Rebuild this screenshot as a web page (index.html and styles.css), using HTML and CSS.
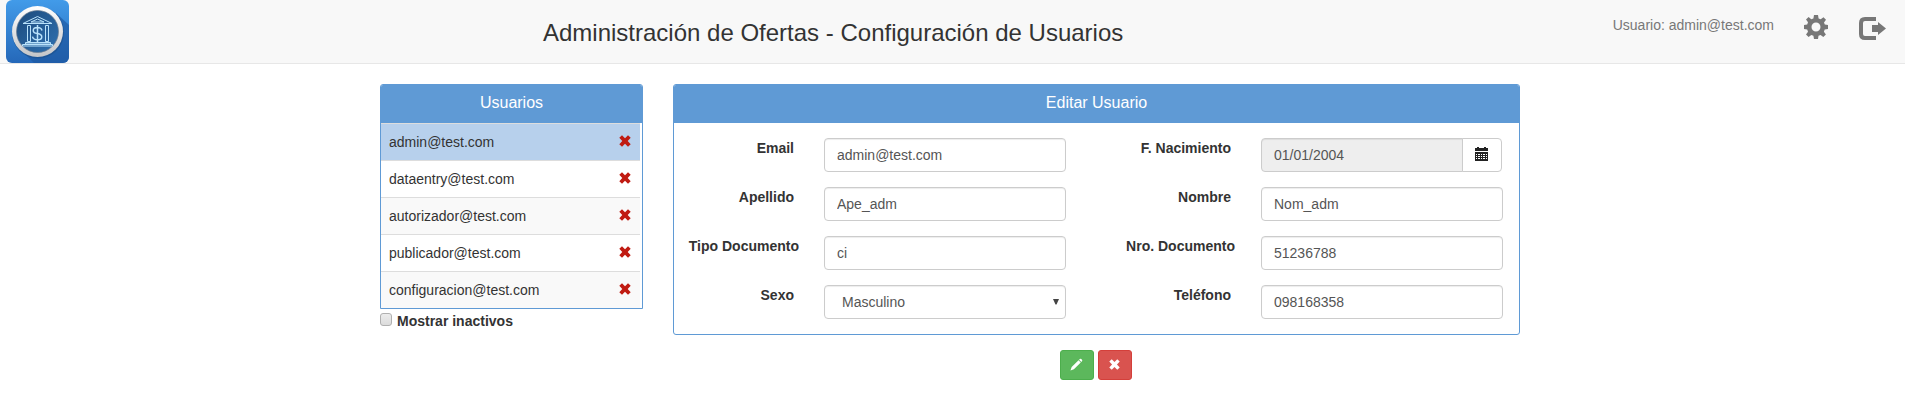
FILE: index.html
```html
<!DOCTYPE html>
<html lang="es">
<head>
<meta charset="utf-8">
<title>Configuración de Usuarios</title>
<link rel="stylesheet" href="styles.css">
</head>
<body>
<svg class="defs" width="0" height="0">
  <symbol id="remove" viewBox="0 0 12 12"><path d="M3 0.3 L6 3.2 L9 0.3 L11.7 2.8 L8.7 6 L11.7 9.2 L9 11.7 L6 8.8 L3 11.7 L0.3 9.2 L3.3 6 L0.3 2.8 Z"/></symbol>
</svg>
<header class="navbar">
  <svg class="logo" viewBox="0 0 63 63">
    <defs>
      <linearGradient id="bg" x1="0" y1="0" x2="0" y2="1"><stop offset="0" stop-color="#429be9"/><stop offset="1" stop-color="#2568b9"/></linearGradient>
      <linearGradient id="ring" x1="0" y1="0" x2="0" y2="1"><stop offset="0" stop-color="#fff"/><stop offset="1" stop-color="#c4c5c8"/></linearGradient>
      <linearGradient id="disc" x1="0" y1="0" x2="1" y2="1"><stop offset="0" stop-color="#1d4b7c"/><stop offset="1" stop-color="#2e70b1"/></linearGradient>
      <clipPath id="tile"><rect width="63" height="63" rx="6"/></clipPath>
    </defs>
    <g clip-path="url(#tile)">
      <rect width="63" height="63" fill="url(#bg)"/>
      <path d="M50 13L63 25V63H28L14 49Z" fill="#1d579f" opacity=".65"/>
      <circle cx="32" cy="32.500" r="26" fill="#194b83" opacity=".5"/>
      <circle cx="31.500" cy="31.500" r="25.500" fill="url(#ring)"/>
      <circle cx="31.500" cy="31.500" r="21" fill="url(#disc)" stroke="#687b91" stroke-width=".7"/>
      <g fill="none" stroke="#b9e2fb" stroke-width="1">
        <path d="M31.500 16.500L46 23.500H17ZM31.500 19L38 22H25ZM21.500 25.500h3v16h-3zM39.500 25.500h3v16h-3z"/>
        <path d="M19.500 42.500h25v1.500h-25zM16.500 44.500h30v1.500h-30z"/>
        <path d="M36 30.500c-.5-2-2-3-4.500-3-5.400 0-5.800 5.200-.3 6 6.300.8 5.800 6.300.3 6.300-3 0-4.500-1.200-5-3.200M31.500 25v17" stroke-width="1.500"/>
      </g>
    </g>
  </svg>
  <h1 class="title">Administración de Ofertas - Configuración de Usuarios</h1>
  <div class="session">
    <span>Usuario: admin@test.com</span>
    <svg class="gear" viewBox="0 0 24 24"><path fill-rule="evenodd" d="M10 0h4l.6 3.400 2.100.9L19.500 2.200 22 4.700l-2 2.700.8 2.200L24 10v4l-3.300.5-.8 2.200 2 2.700-2.600 2.600-2.700-2-2.100.8L14 24h-4l-.6-3.200-2.100-.8-2.700 2L2 19.400l2-2.700-.8-2.200L0 14v-4l3.200-.5.8-2.200-2-2.700 2.600-2.500 2.700 2.100 2.100-.8zM12 7.500a4.500 4.500 0 1 0 0 9 4.500 4.500 0 0 0 0-9z"/></svg>
    <svg class="logout" viewBox="0 0 27 23"><path d="M17 0v4H6Q4 4 4 6V17Q4 19 6 19H17V23H6Q0 23 0 17V6Q0 0 6 0ZM13 8H19V5L27 11.500L19 18V15H13Z"/></svg>
  </div>
</header>
<main class="content">
  <section class="users">
    <div class="panel">
      <h2 class="heading">Usuarios</h2>
      <ul class="list">
        <li class="row active"><span>admin@test.com</span><svg class="x"><use href="#remove"/></svg></li>
        <li class="row"><span>dataentry@test.com</span><svg class="x"><use href="#remove"/></svg></li>
        <li class="row"><span>autorizador@test.com</span><svg class="x"><use href="#remove"/></svg></li>
        <li class="row"><span>publicador@test.com</span><svg class="x"><use href="#remove"/></svg></li>
        <li class="row"><span>configuracion@test.com</span><svg class="x"><use href="#remove"/></svg></li>
      </ul>
    </div>
    <label class="inactive"><span class="check"></span>Mostrar inactivos</label>
  </section>
  <section class="editor">
    <div class="panel rounded">
      <h2 class="heading">Editar Usuario</h2>
      <div class="form">
        <label class="label">Email</label><input class="input" value="admin@test.com">
        <label class="label">F. Nacimiento</label>
        <div class="date"><input class="input locked" value="01/01/2004" readonly><button class="addon"><svg class="calendar" viewBox="0 0 14 14"><path fill-rule="evenodd" d="M0 1H2V0H4V1H9V0H11V1H13V4H0ZM0 5H13V14H0ZM1 7v1h1V7zM3 7v1h2V7zM6 7v1h1V7zM8 7v1h2V7zM11 7v1h1V7zM1 9v1h1V9zM3 9v1h2V9zM6 9v1h1V9zM8 9v1h2V9zM11 9v1h1V9zM1 11v1h1v-1zM3 11v1h2v-1zM6 11v1h1v-1zM8 11v1h2v-1zM11 11v1h1v-1z"/></svg></button></div>
        <label class="label">Apellido</label><input class="input" value="Ape_adm">
        <label class="label">Nombre</label><input class="input" value="Nom_adm">
        <label class="label wide">Tipo Documento</label><input class="input" value="ci">
        <label class="label wide">Nro. Documento</label><input class="input" value="51236788">
        <label class="label">Sexo</label><div class="input select"><span>Masculino</span><svg class="arrow" viewBox="0 0 6 6"><path d="M0 0H6L3.500 5.500H2.500Z"/></svg></div>
        <label class="label">Teléfono</label><input class="input" value="098168358">
      </div>
    </div>
    <div class="actions">
      <button class="btn save"><svg class="pencil" viewBox="0 0 14 14"><path d="M10.500 1.100Q11.300.3 12.100 1.100L12.900 1.900Q13.700 2.700 12.900 3.500L12.200 4.200 9.800 1.800zM9.200 2.400L11.600 4.800 4.200 12.200 .5 13.500 1.800 9.800z"/></svg></button>
      <button class="btn cancel"><svg class="x" viewBox="0 0 12 12"><use href="#remove" width="12" height="12"/></svg></button>
    </div>
  </section>
</main>
</body>
</html>
```

FILE: styles.css
```css
* { box-sizing: border-box; }
body { margin: 0; background: #fff; color: #333; font: 14px/20px "Liberation Sans", Arial, sans-serif; }
.defs { display: block; }
.navbar { display: grid; grid-template-columns: 543px 1fr auto; height: 64px; background: #f8f8f8; border-bottom: 1px solid #e7e7e7; }
.logo { width: 63px; height: 63px; margin-left: 6px; }
.title { margin: 20px 0 0; font-size: 24px; line-height: 26px; font-weight: 400; white-space: nowrap; }
.session { display: flex; align-items: flex-start; padding: 15px 19px 0 0; color: #777; fill: #777; }
.gear { width: 24px; height: 24px; margin-left: 30px; }
.logout { width: 27px; height: 23px; margin: 2px 0 0 31px; }
.content { display: flex; gap: 30px; padding: 20px 0 0 380px; }
.users { width: 263px; }
.editor { width: 847px; }
.panel { border: 1px solid #5f9ad5; border-radius: 3px 3px 0 0; }
.rounded { border-radius: 3px; }
.heading { height: 38px; margin: 0; border-radius: 2px 2px 0 0; background: #5f9ad5; color: #fff; font-size: 16px; line-height: 36px; font-weight: 400; text-align: center; }
.list { list-style: none; margin: 0; padding: 0 2px 0 0; }
.row { display: flex; justify-content: space-between; height: 37px; padding: 8px 9px 0 8px; border-top: 1px solid #ddd; }
.row:nth-child(odd) { background: #f9f9f9; }
.row.active { background: #b7d0ec; }
.x { width: 12px; height: 12px; }
.row .x { fill: #c01b12; margin-top: 3px; }
.inactive { display: flex; align-items: flex-start; gap: 4px; height: 25px; padding-top: 2px; font-weight: 700; }
.check { width: 12px; height: 13px; margin: 2px 1px 0 0; border: 1px solid #b0b0b0; border-radius: 3px; background: linear-gradient(#ececec, #dcdcdc); }
.form { display: grid; grid-template-columns: 120px 242px 135px 242px; grid-auto-rows: 34px; column-gap: 30px; row-gap: 15px; padding: 15px 0; }
.label { font-weight: 700; text-align: right; white-space: nowrap; }
.wide { margin-right: -5px; }
.form .wide:nth-child(4n+3) { margin-right: -4px; }
.input { width: 100%; height: 34px; padding: 6px 12px; border: 1px solid #ccc; border-radius: 4px; background: #fff; color: #555; font: 14px/20px "Liberation Sans", Arial, sans-serif; box-shadow: inset 0 1px 1px rgba(0,0,0,.075); }
.date { display: flex; width: 241px; }
.locked { width: 202px; flex: none; border-radius: 4px 0 0 4px; background: #eee; }
.addon { width: 40px; height: 34px; margin-left: -1px; padding: 0 0 2px 12px; display: flex; align-items: center; border: 1px solid #ccc; border-radius: 0 4px 4px 0; background: #fff; }
.calendar { width: 14px; height: 14px; fill: #222; }
.select { display: flex; justify-content: space-between; align-items: center; padding: 6px 6px 6px 17px; }
.arrow { width: 6px; height: 6px; fill: #444; }
.actions { display: flex; justify-content: center; gap: 4px; margin: 15px 2px 0 0; }
.btn { display: flex; align-items: center; justify-content: center; width: 34px; height: 30px; padding: 0 0 1px; border: 1px solid; border-radius: 3px; fill: #fff; }
.save { background: #5cb85c; border-color: #4cae4c; }
.cancel { background: #d9534f; border-color: #d43f3a; }
.pencil { width: 13px; height: 13px; }
.btn .x { width: 11px; height: 11px; }
```
